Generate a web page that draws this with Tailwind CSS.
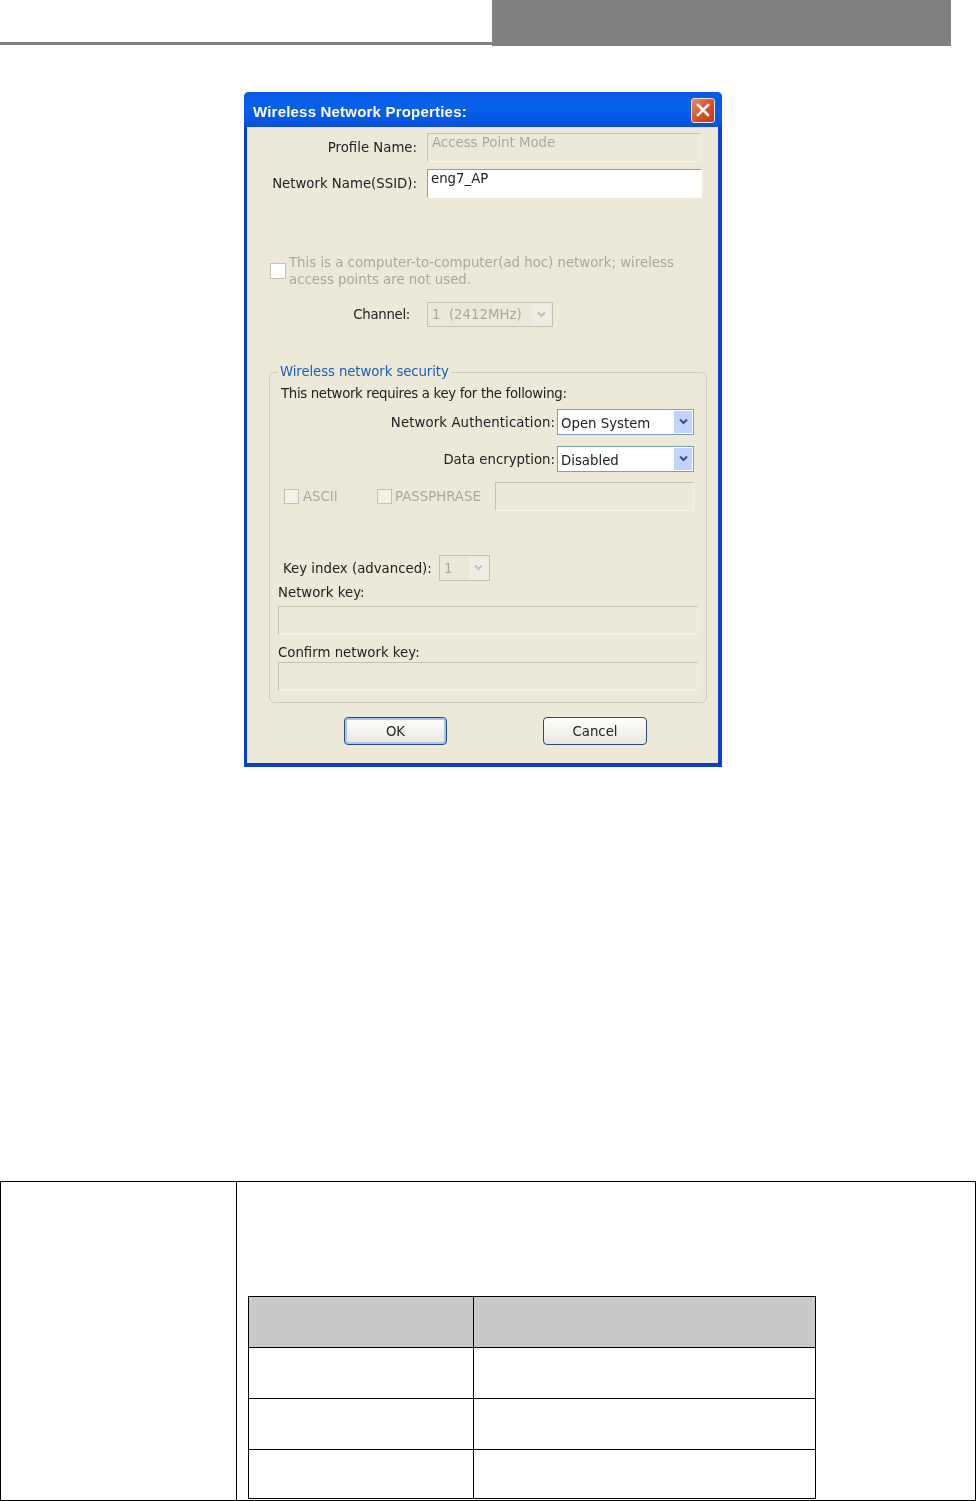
<!DOCTYPE html>
<html lang="en">
<head>
  <meta charset="UTF-8" />
  <meta name="viewport" content="width=device-width, initial-scale=1.0" />
  <title>Wireless Network Properties</title>
  <script src="https://cdn.jsdelivr.net/npm/@tailwindcss/browser@4"></script>
</head>
<body class="bg-white font-['Liberation_Sans',Arial,sans-serif]">
  <!-- page header -->
  <div class="flex h-[46px] items-start">
    <div class="mt-[42px] h-[3px] w-[492px] bg-[#808080]"></div>
    <div class="h-[46px] w-[459px] bg-[#808080]"></div>
  </div>

  <!-- dialog -->
  <div class="ml-[244px] mt-[46px] h-[675px] w-[478px] overflow-hidden rounded-t-[5px] bg-[#0a3fd0] font-['DejaVu_Sans',sans-serif] text-[13.3px] leading-[17px] text-[#222] blur-[0.4px]">
    <div class="flex h-[35px] items-center justify-between bg-gradient-to-b from-[#0a5ae6] via-[#0560ea] to-[#0a4fd8] pl-[9px] pr-[7px]">
      <span class="pt-[3px] font-['Liberation_Sans',Arial,sans-serif] text-[15px] font-bold tracking-[0.2px] text-white">Wireless Network Properties:</span>
      <div class="mt-[1px] flex h-[25px] w-[24px] items-center justify-center rounded-[3px] border border-[#e8e4e0] bg-gradient-to-br from-[#e88a6a] via-[#d9512c] to-[#c03a18]">
        <svg width="14" height="14" viewBox="0 0 14 14"><path d="M2 2 L12 12 M12 2 L2 12" stroke="#fff" stroke-width="2.6" stroke-linecap="square" /></svg>
      </div>
    </div>

    <div class="ml-[3px] mr-[4px] flex h-[636px] flex-col bg-[#ece9d8]">
      <!-- profile -->
      <div class="mt-[6px] flex gap-[10px]">
        <div class="flex h-[29px] w-[170px] items-center justify-end">Profile Name:</div>
        <div class="h-[29px] w-[274px] border border-[#c4c1b0] border-b-[#f4f2e8] border-r-[#f4f2e8] pl-[4px] text-[#aca899]">Access Point Mode</div>
      </div>
      <div class="mt-[7px] flex gap-[10px]">
        <div class="flex h-[29px] w-[170px] items-center justify-end">Network Name(SSID):</div>
        <div class="h-[29px] w-[275px] border border-[#9d9a8a] border-b-white border-r-white bg-white pl-[3px]">eng7_AP</div>
      </div>

      <!-- ad hoc -->
      <div class="ml-[23px] mt-[56px] flex items-center gap-[3px] text-[#aca899]">
        <div class="h-[16px] w-[16px] border border-[#c4c1b0] bg-white"></div>
        <div class="w-[420px]">This is a computer-to-computer(ad hoc) network; wireless<br />access points are not used.</div>
      </div>
      <div class="mt-[14px] flex gap-[17px]">
        <div class="flex h-[25px] w-[163px] items-center justify-end tracking-[-0.3px]">Channel:</div>
        <div class="flex h-[25px] w-[126px] items-center justify-between border border-[#c4c1b0] pl-[4px] pr-[1px] text-[#aca899]">
          <span>1&nbsp; (2412MHz)</span>
          <div class="flex h-[22px] w-[19px] items-center justify-center bg-[#f0eee4]">
            <svg width="11" height="8" viewBox="0 0 11 8"><path d="M2 1.5 L5.5 5 L9 1.5" fill="none" stroke="#c4c1b0" stroke-width="2" /></svg>
          </div>
        </div>
      </div>

      <!-- security group -->
      <div class="relative ml-[22px] mt-[45px] h-[331px] w-[438px] rounded-[6px] border border-[#d0cebc]">
        <div class="absolute left-[8px] top-[-10px] bg-[#ece9d8] px-[2px] tracking-[-0.1px] text-[#1c5fb5]">Wireless network security</div>
        <div class="ml-[11px] mt-[12px] tracking-[-0.33px]">This network requires a key for the following:</div>

        <div class="mt-[7px] flex justify-end gap-[2px] pr-[12px]">
          <div class="flex h-[26px] items-center tracking-[0.1px]">Network Authentication:</div>
          <div class="flex h-[26px] w-[137px] items-center justify-between border border-[#7f9db9] bg-white pl-[3px] pr-[1px]">
            <span class="pt-[2px]">Open System</span>
            <div class="flex h-[22px] w-[18px] items-center justify-center bg-[#c1d3fb]">
              <svg width="11" height="8" viewBox="0 0 11 8"><path d="M2 1.5 L5.5 5 L9 1.5" fill="none" stroke="#34508f" stroke-width="2" /></svg>
            </div>
          </div>
        </div>
        <div class="mt-[11px] flex justify-end gap-[2px] pr-[12px]">
          <div class="flex h-[26px] items-center">Data encryption:</div>
          <div class="flex h-[26px] w-[137px] items-center justify-between border border-[#7f9db9] bg-white pl-[3px] pr-[1px]">
            <span class="pt-[2px]">Disabled</span>
            <div class="flex h-[22px] w-[18px] items-center justify-center bg-[#c1d3fb]">
              <svg width="11" height="8" viewBox="0 0 11 8"><path d="M2 1.5 L5.5 5 L9 1.5" fill="none" stroke="#34508f" stroke-width="2" /></svg>
            </div>
          </div>
        </div>

        <div class="mt-[10px] flex h-[29px] items-center pl-[14px] pr-[12px] text-[#aca899]">
          <div class="h-[15px] w-[15px] border border-[#c4c1b0] bg-[#f4f2e8]"></div>
          <span class="ml-[4px] w-[35px]">ASCII</span>
          <div class="ml-[39px] h-[15px] w-[15px] border border-[#c4c1b0] bg-[#f4f2e8]"></div>
          <span class="ml-[3px] whitespace-nowrap">PASSPHRASE</span>
          <div class="ml-auto h-[29px] w-[199px] border border-[#c4c1b0] border-b-[#f4f2e8] border-r-[#f4f2e8]"></div>
        </div>

        <div class="mt-[44px] flex items-center gap-[8px] pl-[13px]">
          <div class="w-[148px] whitespace-nowrap">Key index (advanced):</div>
          <div class="flex h-[26px] w-[51px] items-center justify-between border border-[#c4c1b0] pl-[4px] pr-[1px] text-[#aca899]">
            <span>1</span>
            <div class="flex h-[23px] w-[19px] items-center justify-center bg-[#f0eee4]">
              <svg width="11" height="8" viewBox="0 0 11 8"><path d="M2 1.5 L5.5 5 L9 1.5" fill="none" stroke="#c4c1b0" stroke-width="2" /></svg>
            </div>
          </div>
        </div>
        <div class="ml-[8px] mt-[3px]">Network key:</div>
        <div class="ml-[8px] mt-[5px] h-[29px] w-[420px] border border-[#c4c1b0] border-b-[#f4f2e8] border-r-[#f4f2e8]"></div>
        <div class="ml-[8px] mt-[9px]">Confirm network key:</div>
        <div class="ml-[8px] mt-[1px] h-[29px] w-[420px] border border-[#c4c1b0] border-b-[#f4f2e8] border-r-[#f4f2e8]"></div>
      </div>

      <!-- buttons -->
      <div class="ml-[97px] mt-[14px] flex gap-[96px]">
        <div class="flex h-[28px] w-[103px] items-center justify-center rounded-[4px] border border-[#2a4a7a] bg-gradient-to-b from-white to-[#e8e6dc] shadow-[inset_0_0_0_2px_#a9c4ee]">OK</div>
        <div class="flex h-[28px] w-[104px] items-center justify-center rounded-[4px] border border-[#2a4a7a] bg-gradient-to-b from-white to-[#e8e6dc]">Cancel</div>
      </div>
    </div>
  </div>

  <!-- bottom table -->
  <div class="mt-[414px] flex h-[320px] w-[976px] border border-black">
    <div class="w-[236px] border-r border-black"></div>
    <div class="flex-1 pl-[11px] pt-[114px]">
      <div class="grid w-[568px] grid-cols-[225px_1fr] border border-black">
        <div class="h-[51px] border-b border-r border-black bg-[#c8c8c8]"></div>
        <div class="h-[51px] border-b border-black bg-[#c8c8c8]"></div>
        <div class="h-[51px] border-b border-r border-black"></div>
        <div class="h-[51px] border-b border-black"></div>
        <div class="h-[51px] border-b border-r border-black"></div>
        <div class="h-[51px] border-b border-black"></div>
        <div class="h-[48px] border-r border-black"></div>
        <div class="h-[48px]"></div>
      </div>
    </div>
  </div>
</body>
</html>
